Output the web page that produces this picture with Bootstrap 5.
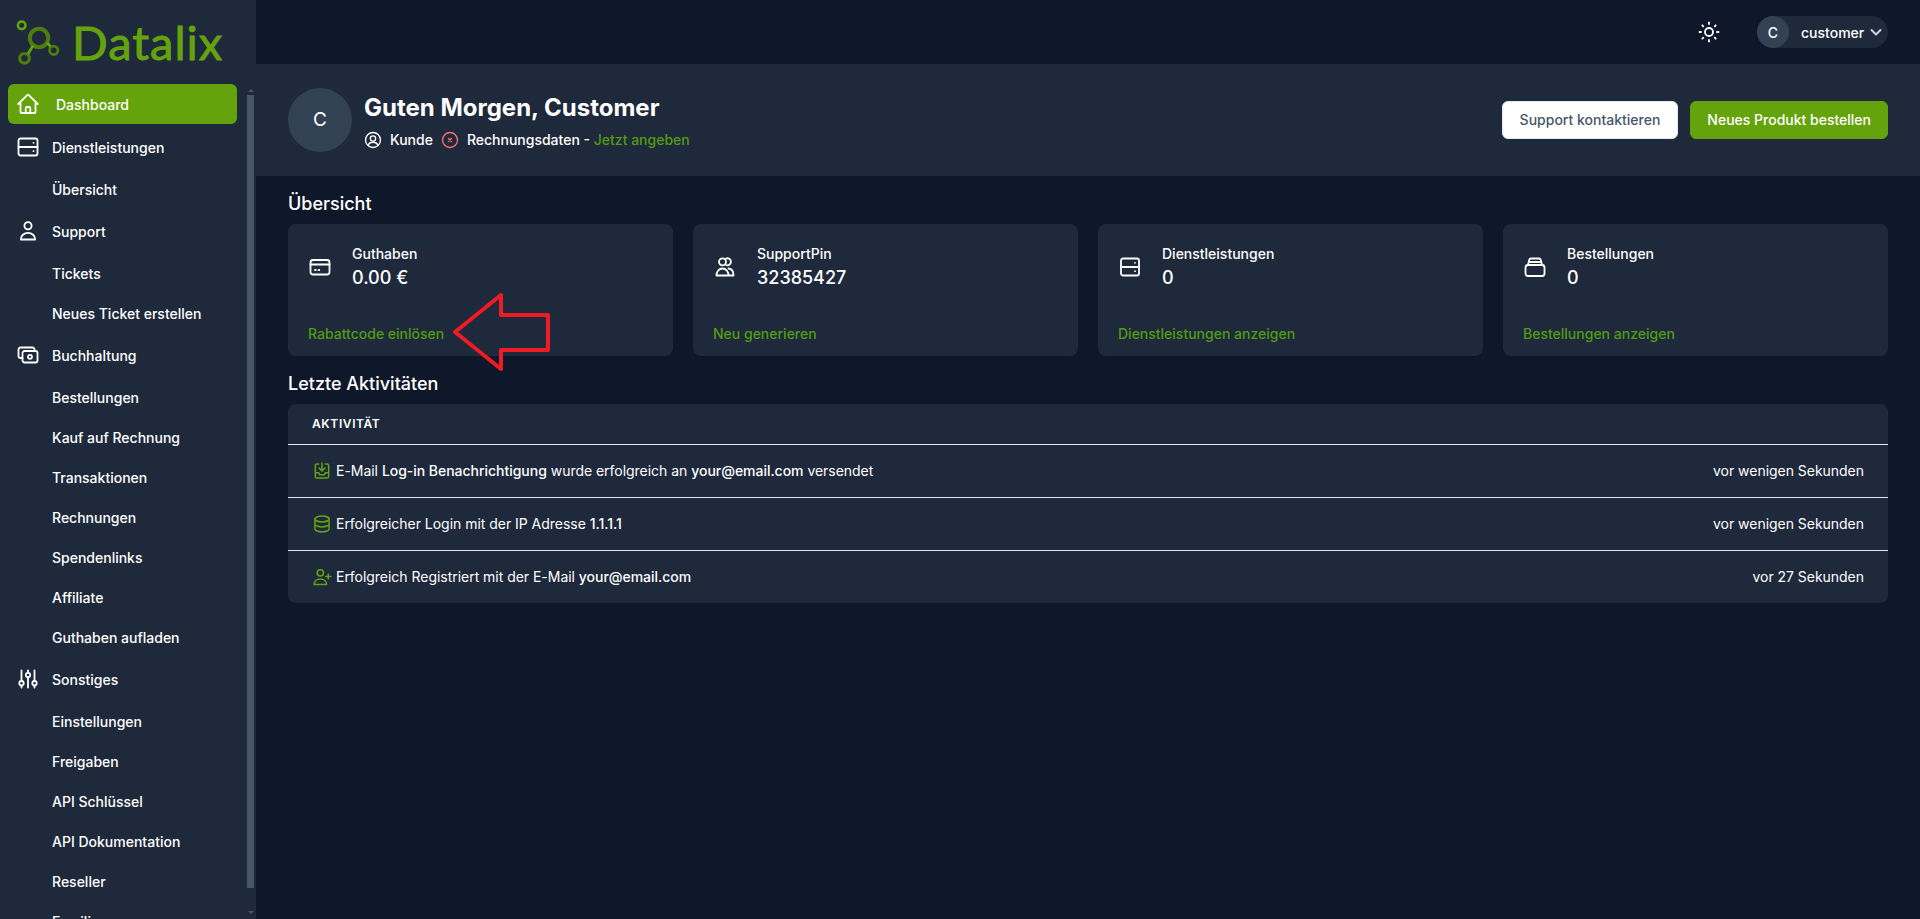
<!DOCTYPE html>
<html lang="de">
<head>
  <meta charset="UTF-8" />
  <title>Datalix Dashboard</title>
  <meta name="viewport" content="width=device-width, initial-scale=1" />
  <link href="https://cdn.jsdelivr.net/npm/bootstrap@5.3.0/dist/css/bootstrap.min.css" rel="stylesheet" />
  <style>
    html, body { height: 100%; overflow: hidden; }
    body { background-color: #0f172a; color: #fff; font-family: Inter, "Liberation Sans", sans-serif; font-size: 14px; }
    svg { flex-shrink: 0; display: block; }
    .ic { fill: none; stroke: currentColor; stroke-width: 1.8; stroke-linecap: round; stroke-linejoin: round; }

    .side-panel { width: 256px; height: 919px; background-color: #1e293b; flex-shrink: 0; position: relative; overflow: hidden; }
    .logo-box { height: 84px; padding: 0 0 0 16px; gap: 9px; align-items: center; }
    .logo-text { color: #65a30d; font-family: Lato, sans-serif; font-size: 47px; font-weight: 400; line-height: 1; letter-spacing: 1px; -webkit-text-stroke: .9px #65a30d; }
    .side-list { padding-right: 19px; }
    .side-item { color: #fff; text-decoration: none; font-weight: 500; display: flex; align-items: center; height: 40px; }
    .side-active { background-color: #65a30d; border-radius: 6px; margin-left: 8px; margin-bottom: 1px; padding-left: 8px; gap: 16px; }
    .side-group { height: 44px; padding-left: 16px; gap: 12px; }
    .side-sub { padding-left: 52px; }
    .scroll-thumb { position: absolute; left: 247px; top: 95px; width: 7px; height: 793px; background-color: #475569; }
    .scroll-up, .scroll-down { position: absolute; left: 248px; width: 0; height: 0; border-left: 3px solid transparent; border-right: 3px solid transparent; }
    .scroll-up { top: 89px; border-bottom: 3px solid #475569; }
    .scroll-down { top: 911px; border-top: 3px solid #475569; }

    .top-strip { height: 64px; padding-right: 32px; gap: 36px; }
    .user-pill { background-color: #1e293b; border-radius: 16px; height: 32px; width: 131px; }
    .user-circle { width: 32px; height: 32px; border-radius: 50%; background-color: #334155; font-weight: 500; }
    .user-chevron { color: #cbd5e1; margin-left: 6px; stroke-width: 2; }
    .hello-bar { background-color: #1e293b; height: 112px; padding: 24px 32px; }
    .hello-left { height: 64px; }
    .hello-avatar { width: 64px; height: 64px; border-radius: 50%; background-color: #334155; font-size: 19px; font-weight: 400; }
    .hello-text { margin-left: -4px; }
    .hello-title { font-size: 24px; font-weight: 700; line-height: 32px; }
    .hello-sub { font-weight: 500; line-height: 24px; gap: 8px; margin-top: 4px; }
    .hello-bad { color: #f87171; }
    .green-link { color: #529b12; text-decoration: none; font-weight: 500; }
    .btn-plain { background-color: #fff; color: #475569; font-size: 14px; font-weight: 500; border: 1px solid #e2e8f0; padding: 8px 17px; line-height: 20px; border-radius: 6px; }
    .btn-lime { background-color: #65a30d; color: #fff; font-size: 14px; font-weight: 500; border: 1px solid #65a30d; padding: 8px 16px; line-height: 20px; border-radius: 6px; }
    .btn-gap { column-gap: 12px; }

    .page-body { padding: 0 32px; }
    .sec-title { font-size: 18px; font-weight: 500; line-height: 28px; margin: 14px 0 6px; }
    .stat-row { --bs-gutter-x: 20px; --bs-gutter-y: 0; }
    .stat-box { background-color: #1e293b; border-radius: 8px; height: 132px; padding: 20px 20px 12px; position: relative; }
    .stat-top { column-gap: 20px; }
    .stat-icon { margin-top: 11px; }
    .stat-label { font-weight: 500; line-height: 20px; }
    .stat-value { font-size: 18px; font-weight: 500; line-height: 28px; }
    .arrow-mark { position: absolute; left: 163px; top: 69px; }

    .activity-box { background-color: #1e293b; border-radius: 8px; overflow: hidden; }
    .activity-head { height: 40px; padding-left: 24px; font-size: 12px; font-weight: 600; letter-spacing: .6px; text-transform: uppercase; }
    .activity-row { height: 53px; padding: 0 24px 1px; border-top: 1px solid #e2e8f0; letter-spacing: -.03px; }
    .activity-row b { font-weight: 500; }
    .activity-icon { color: #65a30d; margin-right: 4px; }
  </style>
</head>
<body class="d-flex">

<!-- Sidebar -->
<aside class="side-panel">
  <div class="logo-box d-flex">
    <svg width="47" height="50" viewBox="16 16 47 50" fill="none">
      <circle cx="21.7" cy="24.3" r="3.8" stroke="#65a30d" stroke-width="2.6"/>
      <circle cx="39" cy="37" r="9.2" stroke="#4d7c0f" stroke-width="4"/>
      <circle cx="24.5" cy="57.3" r="4.8" stroke="#4d7c0f" stroke-width="3.2"/>
      <circle cx="53.7" cy="49.3" r="4.2" stroke="#4d7c0f" stroke-width="2.8"/>
      <path d="M33 44.5 28 53M47 41.5l3.4 4" stroke="#65a30d" stroke-width="2.8"/>
    </svg>
    <span class="logo-text">Datalix</span>
  </div>

  <nav class="side-list">
    <a href="#" class="side-item side-active">
      <svg class="ic" width="24" height="24" viewBox="0 0 24 24"><path d="M2.25 12l8.954-8.955c.44-.439 1.152-.439 1.591 0L21.75 12M4.5 9.75v10.125c0 .621.504 1.125 1.125 1.125H9.75v-4.875c0-.621.504-1.125 1.125-1.125h2.25c.621 0 1.125.504 1.125 1.125V21h4.125c.621 0 1.125-.504 1.125-1.125V9.75M8.25 21h8.25"/></svg>
      Dashboard
    </a>
    <a href="#" class="side-item side-group">
      <svg class="ic" width="24" height="24" viewBox="0 0 24 24"><rect x="2.5" y="3.500" width="19" height="17" rx="2"/><path d="M2.5 12h19M17.500 7.800h.01M17.500 16.200h.01"/></svg>
      Dienstleistungen
    </a>
    <a href="#" class="side-item side-sub">Übersicht</a>
    <a href="#" class="side-item side-group">
      <svg class="ic" width="24" height="24" viewBox="0 0 24 24"><circle cx="12" cy="6.800" r="3.600"/><path d="M4.800 20.500c0-3.900 3.200-6.600 7.200-6.600s7.200 2.700 7.200 6.600z"/></svg>
      Support
    </a>
    <a href="#" class="side-item side-sub">Tickets</a>
    <a href="#" class="side-item side-sub">Neues Ticket erstellen</a>
    <a href="#" class="side-item side-group">
      <svg class="ic" width="24" height="24" viewBox="0 0 24 24"><rect x="6.500" y="8" width="15" height="11.500" rx="2"/><circle cx="14" cy="13.800" r="2"/><path d="M18.500 8V6.500a2 2 0 0 0-2-2h-12a2 2 0 0 0-2 2V13a2 2 0 0 0 2 2h2"/></svg>
      Buchhaltung
    </a>
    <a href="#" class="side-item side-sub">Bestellungen</a>
    <a href="#" class="side-item side-sub">Kauf auf Rechnung</a>
    <a href="#" class="side-item side-sub">Transaktionen</a>
    <a href="#" class="side-item side-sub">Rechnungen</a>
    <a href="#" class="side-item side-sub">Spendenlinks</a>
    <a href="#" class="side-item side-sub">Affiliate</a>
    <a href="#" class="side-item side-sub">Guthaben aufladen</a>
    <a href="#" class="side-item side-group">
      <svg class="ic" width="24" height="24" viewBox="0 0 24 24"><path d="M5.500 3.500v10M5.500 19v1.500M12 3.500V5M12 11v9.500M18.500 3.500v10M18.500 19v1.500"/><circle cx="5.500" cy="16.200" r="2.200"/><circle cx="12" cy="8" r="2.200"/><circle cx="18.500" cy="16.200" r="2.200"/></svg>
      Sonstiges
    </a>
    <a href="#" class="side-item side-sub">Einstellungen</a>
    <a href="#" class="side-item side-sub">Freigaben</a>
    <a href="#" class="side-item side-sub">API Schlüssel</a>
    <a href="#" class="side-item side-sub">API Dokumentation</a>
    <a href="#" class="side-item side-sub">Reseller</a>
    <a href="#" class="side-item side-sub">Familie</a>
  </nav>

  <div class="scroll-up"></div>
  <div class="scroll-thumb"></div>
  <div class="scroll-down"></div>
</aside>

<div class="flex-grow-1">
  <!-- Top bar -->
  <div class="top-strip d-flex align-items-center justify-content-end">
    <svg class="ic" width="24" height="24" viewBox="0 0 24 24"><circle cx="12" cy="12" r="4"/><path d="M12 2.500v1.500M12 20v1.500M2.500 12H4M20 12h1.500M5.300 5.300l1 1M17.700 17.700l1 1M5.300 18.700l1-1M17.700 6.300l1-1"/></svg>
    <div class="user-pill d-flex align-items-center">
      <span class="user-circle d-flex align-items-center justify-content-center">C</span>
      <span class="fw-medium ms-2 ps-1">customer</span>
      <svg class="ic user-chevron" width="12" height="12" viewBox="0 0 12 12"><path d="M1.500 4l4.500 4.500L10.500 4"/></svg>
    </div>
  </div>

  <!-- Greeting -->
  <div class="hello-bar d-flex justify-content-between align-items-center">
    <div class="d-flex gap-3 hello-left">
      <div class="hello-avatar d-flex align-items-center justify-content-center">C</div>
      <div class="pt-1 hello-text">
        <div class="hello-title">Guten Morgen, Customer</div>
        <div class="hello-sub d-flex align-items-center">
          <svg class="ic" width="18" height="18" viewBox="0 0 24 24"><circle cx="12" cy="12" r="10"/><circle cx="12" cy="10" r="3.500"/><path d="M5.500 19c1-3 3.500-4 6.500-4s5.500 1 6.500 4"/></svg>
          <span>Kunde</span>
          <svg class="ic hello-bad" width="18" height="18" viewBox="0 0 24 24"><circle cx="12" cy="12" r="10"/><path d="M10 10l4 4M14 10l-4 4"/></svg>
          <span>Rechnungsdaten - <a href="#" class="green-link">Jetzt angeben</a></span>
        </div>
      </div>
    </div>
    <div class="d-flex btn-gap">
      <button class="btn btn-plain">Support kontaktieren</button>
      <button class="btn btn-lime">Neues Produkt bestellen</button>
    </div>
  </div>

  <div class="page-body">
    <h2 class="sec-title">Übersicht</h2>
    <div class="row stat-row">
      <div class="col-3">
        <div class="stat-box d-flex flex-column justify-content-between">
          <div class="d-flex stat-top">
            <svg class="ic stat-icon" width="24" height="24" viewBox="0 0 24 24"><rect x="2.500" y="5" width="19" height="14.500" rx="2.500"/><path d="M2.500 9.500h19M7 15h.8M10.500 15h.8"/></svg>
            <div><div class="stat-label">Guthaben</div><div class="stat-value">0.00 €</div></div>
          </div>
          <a href="#" class="green-link">Rabattcode einlösen</a>
          <svg class="arrow-mark" width="102" height="80" viewBox="0 0 102 80" fill="none"><path d="M4 39 50 2V22H97V57H50V76z" stroke="#ed1c24" stroke-width="4" stroke-linejoin="round"/></svg>
        </div>
      </div>
      <div class="col-3">
        <div class="stat-box d-flex flex-column justify-content-between">
          <div class="d-flex stat-top">
            <svg class="ic stat-icon" width="24" height="24" viewBox="0 0 24 24"><circle cx="9.500" cy="6.800" r="3.500"/><path d="M13 3.600a3.500 3.500 0 1 1 0 6.400M3.500 20.500c0-4 2.500-7 6-7s6 3 6 7zM15.500 13.500c3 .3 5 3 5 7h-5"/></svg>
            <div><div class="stat-label">SupportPin</div><div class="stat-value">32385427</div></div>
          </div>
          <a href="#" class="green-link">Neu generieren</a>
        </div>
      </div>
      <div class="col-3">
        <div class="stat-box d-flex flex-column justify-content-between">
          <div class="d-flex stat-top">
            <svg class="ic stat-icon" width="24" height="24" viewBox="0 0 24 24"><rect x="3" y="3.500" width="18" height="17" rx="2"/><path d="M3 12h18M17 7.800h.01M17 16.200h.01"/></svg>
            <div><div class="stat-label">Dienstleistungen</div><div class="stat-value">0</div></div>
          </div>
          <a href="#" class="green-link">Dienstleistungen anzeigen</a>
        </div>
      </div>
      <div class="col-3">
        <div class="stat-box d-flex flex-column justify-content-between">
          <div class="d-flex stat-top">
            <svg class="ic stat-icon" width="24" height="24" viewBox="0 0 24 24"><rect x="2.500" y="10" width="19" height="11" rx="2.500"/><path d="M5 10 6.200 5a2 2 0 0 1 2-1.500h7.600a2 2 0 0 1 2 1.500L19 10M6 7h12"/></svg>
            <div><div class="stat-label">Bestellungen</div><div class="stat-value">0</div></div>
          </div>
          <a href="#" class="green-link">Bestellungen anzeigen</a>
        </div>
      </div>
    </div>

    <h2 class="sec-title">Letzte Aktivitäten</h2>
    <div class="activity-box">
      <div class="activity-head d-flex align-items-center">Aktivität</div>
      <div class="activity-row d-flex align-items-center justify-content-between">
        <div class="d-flex align-items-center">
          <svg class="ic activity-icon" width="20" height="20" viewBox="0 0 24 24"><path d="M8 3.500H6a2 2 0 0 0-2 2v13a2 2 0 0 0 2 2h12a2 2 0 0 0 2-2v-13a2 2 0 0 0-2-2h-2M12 2.500v9M8.500 8.500l3.500 3.500 3.500-3.500M4 14h4l1 2.500h6l1-2.500h4"/></svg>
          <span>E-Mail <b>Log-in Benachrichtigung</b> wurde erfolgreich an <b>your@email.com</b> versendet</span>
        </div>
        <span>vor wenigen Sekunden</span>
      </div>
      <div class="activity-row d-flex align-items-center justify-content-between">
        <div class="d-flex align-items-center">
          <svg class="ic activity-icon" width="20" height="20" viewBox="0 0 24 24"><ellipse cx="12" cy="6" rx="8.500" ry="3.500"/><path d="M3.500 6v12c0 1.900 3.800 3.500 8.500 3.500s8.500-1.600 8.500-3.500V6M3.500 12c0 1.900 3.800 3.500 8.500 3.500s8.500-1.600 8.500-3.500"/></svg>
          <span>Erfolgreicher Login mit der IP Adresse <b>1.1.1.1</b></span>
        </div>
        <span>vor wenigen Sekunden</span>
      </div>
      <div class="activity-row d-flex align-items-center justify-content-between">
        <div class="d-flex align-items-center">
          <svg class="ic activity-icon" width="20" height="20" viewBox="0 0 24 24"><circle cx="10" cy="7" r="3.800"/><path d="M2.500 21c0-4 3.200-6.500 7.500-6.500s7.500 2.500 7.500 6.500zM19.500 8.500v6M16.500 11.500h6"/></svg>
          <span>Erfolgreich Registriert mit der E-Mail <b>your@email.com</b></span>
        </div>
        <span>vor 27 Sekunden</span>
      </div>
    </div>
  </div>
</div>

<script src="https://cdn.jsdelivr.net/npm/bootstrap@5.3.0/dist/js/bootstrap.bundle.min.js"></script>
</body>
</html>
